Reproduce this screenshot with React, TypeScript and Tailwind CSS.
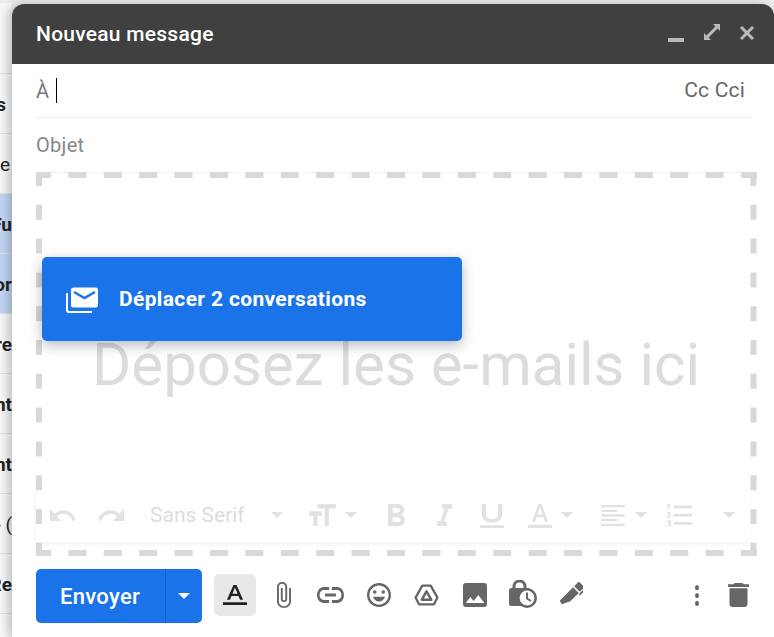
const Mi = ({ d, vb, w, h, className = "" }: { d: string; vb: string; w: number; h: number; className?: string }) => (
  <svg width={w} height={h} viewBox={vb} preserveAspectRatio="none" fill="currentColor" className={`shrink-0 ${className}`}>
    <path d={d} />
  </svg>
);

const Caret = ({ className = "" }: { className?: string }) => (
  <svg width="12" height="6" viewBox="0 0 12 6" fill="currentColor" className={`shrink-0 ${className}`}>
    <path d="M0 0h12L6 6z" />
  </svg>
);

const P = {
  undo: "M12.5 8c-2.65 0-5.05.99-6.9 2.6L2 7v9h9l-3.62-3.62c1.39-1.16 3.16-1.88 5.12-1.88 3.54 0 6.55 2.31 7.6 5.5l2.37-.78C21.08 11.03 17.15 8 12.5 8z",
  redo: "M18.4 10.6C16.55 8.99 14.15 8 11.5 8c-4.65 0-8.58 3.03-9.96 7.22L3.9 16c1.05-3.19 4.05-5.5 7.6-5.5 1.95 0 3.73.72 5.12 1.88L13 16h9V7l-3.6 3.6z",
  size: "M9 4v3h5v12h3V7h5V4H9zm-6 8h3v7h3v-7h3V9H3v3z",
  bold: "M15.6 10.79c.97-.67 1.65-1.77 1.65-2.79 0-2.26-1.75-4-4-4H7v14h7.04c2.09 0 3.71-1.7 3.71-3.79 0-1.52-.86-2.82-2.15-3.42zM10 6.5h3c.83 0 1.5.67 1.5 1.5s-.67 1.5-1.5 1.5h-3v-3zm3.5 9H10v-3h3.5c.83 0 1.5.67 1.5 1.5s-.67 1.5-1.5 1.5z",
  italic: "M10 4v3h2.21l-3.42 8H6v3h8v-3h-2.21l3.42-8H18V4z",
  underline: "M12 17c3.31 0 6-2.69 6-6V3h-2.5v8c0 1.93-1.57 3.5-3.5 3.5S8.5 12.93 8.5 11V3H6v8c0 3.31 2.69 6 6 6zm-7 2v2h14v-2H5z",
  color: "M2 20.400h20V23H2v-2.600zM5.300 18h2.500l1.300-3.600h5.800l1.300 3.600h2.500L13.300 4h-2.600L5.300 18zm4.600-5.800l2-5.600h.2l2 5.600H9.900z",
  align: "M15 15H3v2h12v-2zm0-8H3v2h12V7zM3 13h18v-2H3v2zm0 8h18v-2H3v2zM3 3v2h18V3H3z",
  numbered: "M2 17h2v.5H3v1h1v.5H2v1h3v-4H2v1zm1-9h1V4H2v1h1v3zm-1 3h1.8L2 13.1v.9h3v-1H3.2L5 10.9V10H2v1zm5-6v2h14V5H7zm0 14h14v-2H7v2zm0-6h14v-2H7v2z",
  attach: "M16.5 6v11.5c0 2.21-1.79 4-4 4s-4-1.79-4-4V5c0-1.38 1.12-2.5 2.5-2.5s2.5 1.12 2.5 2.5v10.5c0 .55-.45 1-1 1s-1-.45-1-1V6H10v9.5c0 1.38 1.12 2.5 2.5 2.5s2.5-1.12 2.5-2.5V5c0-2.21-1.79-4-4-4S7 2.79 7 5v12.5c0 3.04 2.46 5.5 5.5 5.5s5.5-2.46 5.5-5.5V6h-1.5z",
  link: "M3.9 12c0-1.71 1.39-3.1 3.1-3.1h4V7H7c-2.76 0-5 2.24-5 5s2.24 5 5 5h4v-1.9H7c-1.71 0-3.1-1.39-3.1-3.1zM8 13h8v-2H8v2zm9-6h-4v1.9h4c1.71 0 3.1 1.39 3.1 3.1s-1.39 3.1-3.1 3.1h-4V17h4c2.76 0 5-2.24 5-5s-2.24-5-5-5z",
  smile: "M11.99 2C6.47 2 2 6.48 2 12s4.47 10 9.99 10C17.52 22 22 17.52 22 12S17.52 2 11.99 2zM12 20c-4.42 0-8-3.58-8-8s3.58-8 8-8 8 3.58 8 8-3.58 8-8 8zm3.5-9a1.5 1.5 0 1 0 0-3 1.5 1.5 0 0 0 0 3zm-7 0a1.5 1.5 0 1 0 0-3 1.5 1.5 0 0 0 0 3zM7 13.5c.8 2.3 2.7 4 5 4s4.200-1.700 5-4H7z",
  image: "M21 19V5c0-1.100-.9-2-2-2H5c-1.100 0-2 .9-2 2v14c0 1.100.9 2 2 2h14c1.100 0 2-.9 2-2zM8.500 13.500l2.500 3.010L14.500 12l4.500 6H5l3.500-4.500z",
  more: "M12 8a2 2 0 1 0 0-4 2 2 0 0 0 0 4zm0 2a2 2 0 1 0 0 4 2 2 0 0 0 0-4zm0 6a2 2 0 1 0 0 4 2 2 0 0 0 0-4z",
  trash: "M6 19c0 1.100.9 2 2 2h8c1.100 0 2-.9 2-2V7H6v12zM19 4h-3.500l-1-1h-5l-1 1H5v2h14V4z",
};

const rows = [
  { t: "s", blue: false, n: false, c: "pr-[6px]" },
  { t: "e", blue: false, n: true, c: "pr-[2px]" },
  { t: "Fu", blue: true, n: false, c: "" },
  { t: "or", blue: true, n: false, c: "" },
  { t: "re", blue: false, n: false, c: "" },
  { t: "nt", blue: false, n: false, c: "" },
  { t: "nt", blue: false, n: false, c: "" },
  { t: "- (", blue: false, n: true, c: "" },
  { t: "Re", blue: false, n: false, c: "" },
  { t: "", blue: false, n: false, c: "" },
];

export default function App() {
  return (
    <div className="relative flex w-[774px] h-[637px] overflow-hidden bg-[#ececec] font-['Roboto',sans-serif]">
      {/* Inbox list peeking out behind the compose window */}
      <div className="w-[12px] shrink-0 flex flex-col bg-[#f7f7f8] mt-[3px] pt-[70px]">
        {rows.map((r, i) => (
          <div
            key={i}
            className={`shrink-0 h-[60px] pt-[3px] flex items-center justify-end overflow-hidden border-t border-[#e2e3e4] text-[19px] text-[#222] ${
              r.n ? "font-normal" : "font-bold"
            } ${r.blue ? "bg-[#c2d6f3]" : ""} ${r.c}`}
          >
            <span className="whitespace-nowrap">{r.t}</span>
          </div>
        ))}
      </div>

      {/* Compose window */}
      <div className="relative z-10 flex-1 mt-[4px] flex flex-col bg-white rounded-tl-[12px] rounded-tr-[12px] shadow-[-4px_0_10px_rgba(0,0,0,0.22)] overflow-hidden">
        <div className="h-[60px] shrink-0 bg-[#404040] flex items-center pl-[24px] pr-[20px]">
          <span className="text-white text-[21px] font-medium tracking-[0.25px] flex-1 leading-none">Nouveau message</span>
          <div className="flex items-center text-[#bababa]">
            <div className="w-[16px] h-[4px] bg-[#bababa] mt-[12px]" />
            <svg width="16" height="16" viewBox="0 0 16 16" fill="currentColor" className="ml-[20px] -mt-[4px]">
              <path d="M16 0v7l-2.400-2.400-9 9L7 16H0V9l2.400 2.400 9-9L9 0h7z" />
            </svg>
            <svg width="14" height="14" viewBox="0 0 14 14" fill="none" stroke="currentColor" strokeWidth="3" className="ml-[20px] -mt-[2px]">
              <path d="M1 1l12 12M13 1L1 13" />
            </svg>
          </div>
        </div>

        <div className="ml-[24px] mr-[22px] h-[54px] shrink-0 flex items-center border-b border-[#efefef] text-[20px]">
          <span className="text-[#777]">À</span>
          <span className="ml-[7px] w-[1px] h-[25px] bg-black" />
          <span className="ml-auto mr-[7px] text-[#666] text-[21px] tracking-[0.2px]">Cc Cci</span>
        </div>

        <div className="mx-[24px] h-[54px] shrink-0 flex items-center text-[#888] text-[20px] tracking-[0.3px]">
          Objet
        </div>

        {/* Drop zone */}
        <div className="relative h-[384px] shrink-0 ml-[24px] mr-[17px]">
          <div className="absolute left-0 right-[7px] bottom-[14px] h-[52px] pb-[2px] pl-[14px] bg-white shadow-[-1px_2px_4px_rgba(0,0,0,0.06)] flex items-center text-[#e2e2e2]">
            <Mi d={P.undo} vb="2 7 20 9" w={25} h={12} />
            <Mi d={P.redo} vb="1.500 7 20.500 9" w={26} h={12} className="ml-[23px]" />
            <span className="ml-[26px] text-[21px] text-[#dcdcdc] leading-none">Sans Serif</span>
            <Caret className="ml-[26px]" />
            <Mi d={P.size} vb="3 4 19 15" w={27} h={22} className="ml-[26px]" />
            <Caret className="ml-[9px]" />
            <Mi d={P.bold} vb="7 4 10.750 14" w={17} h={22} className="ml-[31px]" />
            <Mi d={P.italic} vb="6 4 12 14" w={15} h={22} className="ml-[32px]" />
            <Mi d={P.underline} vb="5 3 14 18" w={24} h={24} className="ml-[28px] mt-[2px]" />
            <Mi d={P.color} vb="2 4 20 19" w={24} h={24} className="ml-[24px] mt-[2px]" />
            <Caret className="ml-[9px]" />
            <Mi d={P.align} vb="3 3 18 18" w={24} h={21} className="ml-[28px]" />
            <Caret className="ml-[10px]" />
            <Mi d={P.numbered} vb="2 4 19 16" w={25} h={22} className="ml-[20px]" />
            <Caret className="ml-[31px]" />
          </div>
          <svg width="721" height="384" className="absolute inset-0" fill="none" stroke="#d8d8d8" strokeWidth="6">
            <line x1="0" y1="0.500" x2="721" y2="0.500" stroke="#f3f3f3" strokeWidth="1" />
            <line x1="0" y1="3" x2="721" y2="3" strokeDasharray="18 17.400" strokeDashoffset="3" />
            <line x1="0" y1="381" x2="721" y2="381" strokeDasharray="18 17.400" strokeDashoffset="3" />
            <line x1="3" y1="0" x2="3" y2="384" strokeDasharray="15 18.800" strokeDashoffset="1" />
            <line x1="717.500" y1="0" x2="717.500" y2="384" strokeDasharray="15 18.800" strokeDashoffset="1" />
          </svg>
          <div className="absolute inset-x-0 top-[163px] text-center pr-[1px]">
            <span className="text-[60px] text-[#dcdcdc] leading-[60px] whitespace-nowrap">Déposez les e-mails ici</span>
          </div>
          <div className="absolute left-[6px] top-[85px] w-[420px] h-[84px] rounded-[5px] bg-[#1a73e8] shadow-[0_4px_14px_rgba(0,0,0,0.28)] flex items-center text-white">
            <svg width="32" height="26" viewBox="0 0 32 26" fill="none" className="ml-[24px] mt-[2px] shrink-0">
              <path d="M1 6v17a2 2 0 0 0 2 2h23" stroke="white" strokeWidth="2" />
              <path d="M5 3a2.500 2.500 0 0 1 2.500-2.500h22A2.500 2.500 0 0 1 32 3v15a2.500 2.500 0 0 1-2.500 2.500h-22A2.500 2.500 0 0 1 5 18V3z" fill="white" />
              <path d="M8 5l10.500 6L29 5" stroke="#1a73e8" strokeWidth="2.500" />
            </svg>
            <span className="ml-[21px] mt-[2px] text-[21px] font-bold tracking-[0.35px]">Déplacer 2 conversations</span>
          </div>
        </div>

        {/* Action bar */}
        <div className="flex items-center h-[54px] shrink-0 mt-[13px] ml-[24px] text-[#666]">
          <div className="flex h-[54px] w-[166px] rounded-[5px] bg-[#1a73e8] text-white shrink-0">
            <div className="w-[130px] border-r border-[#155fc2] flex items-center pl-[24px] text-[22px] font-medium tracking-[0.3px]">Envoyer</div>
            <div className="flex-1 flex items-center justify-center"><Caret /></div>
          </div>
          <div className="flex items-center mb-[2px]">
            <div className="ml-[12px] w-[42px] h-[42px] rounded-[5px] bg-[#e8e8e8] flex items-center justify-center text-[#222] shrink-0">
              <Mi d={P.color} vb="2 4 20 19" w={24} h={20} />
            </div>
            <Mi d={P.attach} vb="7 1 11 22" w={14} h={26} className="ml-[21px]" />
            <Mi d={P.link} vb="2 7 20 10" w={27} h={16} className="ml-[26px]" />
            <Mi d={P.smile} vb="2 2 20 20" w={24} h={24} className="ml-[23px]" />
            <svg width="25" height="23" viewBox="0 0 24 22" fill="none" stroke="currentColor" strokeLinejoin="round" className="ml-[23px] shrink-0">
              <path d="M8 1.500h8L22.500 13l-3.300 6.500H4.800L1.500 13z" strokeWidth="2.200" />
              <path d="M12 7l-4.500 8h9z" strokeWidth="2.400" />
            </svg>
            <Mi d={P.image} vb="3 3 18 18" w={24} h={24} className="ml-[24px]" />
            <svg width="28" height="28" viewBox="0 0 28 28" className="ml-[22px] -mt-[2px] shrink-0">
              <rect x="0" y="8" width="21" height="18" rx="2.500" fill="currentColor" />
              <path d="M5 10V6.500a5.500 5.500 0 0 1 11 0V10" fill="none" stroke="currentColor" strokeWidth="3" />
              <circle cx="18" cy="18" r="8.700" fill="white" stroke="currentColor" strokeWidth="2.600" />
              <path d="M18 12.500v6l4 2.500" fill="none" stroke="currentColor" strokeWidth="2" />
            </svg>
            <svg width="24" height="26" viewBox="0 0 24 24" fill="currentColor" className="ml-[22px] shrink-0">
              <g transform="rotate(45 12 12)">
                <path d="M8 -3h8v6.500H8z" />
                <path d="M8 5h8v12H8zM8 17h8l-4 8-4-1z" />
                <path d="M17 -3h1.800v9H17z" />
              </g>
            </svg>
            <Mi d={P.more} vb="10 4 4 16" w={4} h={21} className="ml-[112px]" />
            <Mi d={P.trash} vb="5 3 14 18" w={21} h={24} className="ml-[29px]" />
          </div>
        </div>
      </div>
    </div>
  );
}
